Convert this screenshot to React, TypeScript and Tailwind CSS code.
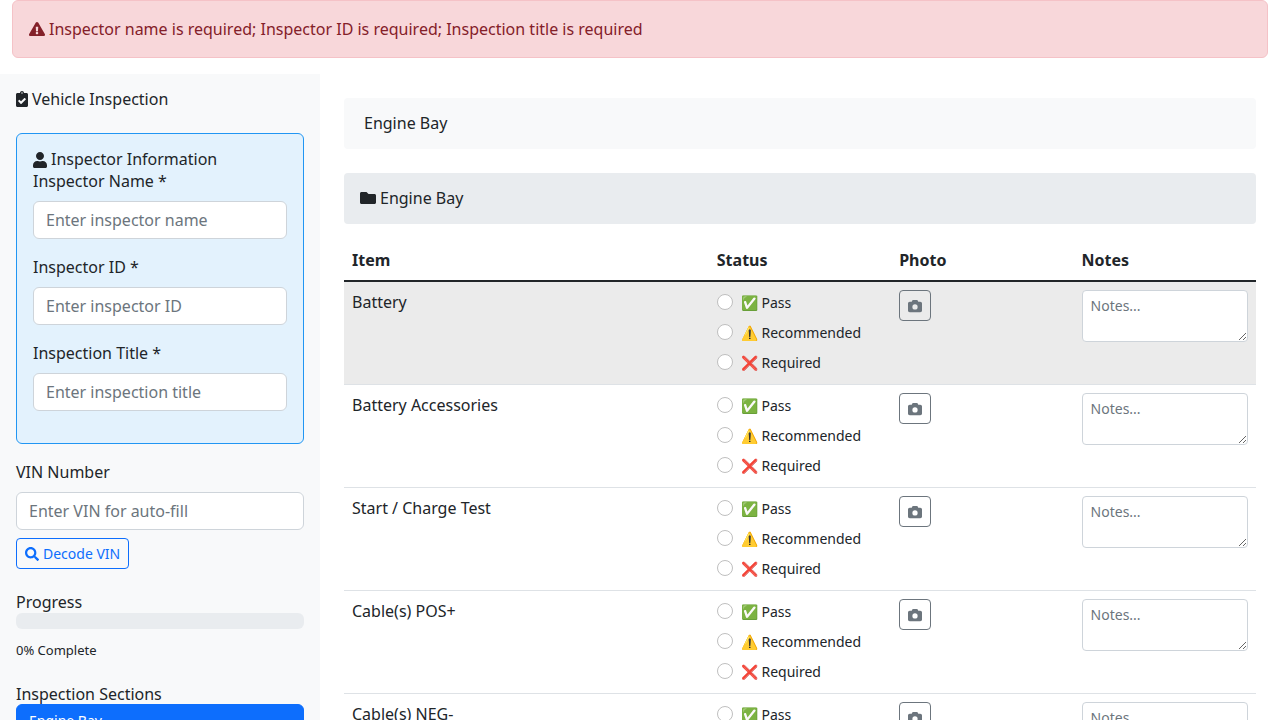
import {
  FaExclamationTriangle,
  FaClipboardCheck,
  FaUser,
  FaSearch,
  FaFolder,
} from 'react-icons/fa';
import { FaCamera } from 'react-icons/fa6';

const items = ['Battery', 'Battery Accessories', 'Start / Charge Test', 'Cable(s) POS+', 'Cable(s) NEG-', 'Drive Belts'];
const sections = ['Engine Bay', 'Fluids', 'Brakes', 'Tires'];
const statuses = [
  { emoji: '✅', label: 'Pass' },
  { emoji: '⚠️', label: 'Recommended' },
  { emoji: '❌', label: 'Required' },
];

const inputClass =
  'block h-[38px] w-full rounded-[6px] border border-[#ced4da] bg-white px-3 text-base text-[#212529] placeholder:text-[#6c757d] outline-none';

const Field = ({ label, placeholder }: { label: string; placeholder: string }) => (
  <div className="mb-4">
    <label className="mb-2 block leading-6">{label}</label>
    <input className={inputClass} placeholder={placeholder} />
  </div>
);

const App = () => {
  return (
    <div className="bg-white text-base leading-6 text-[#212529] [font-family:'Noto_Sans',sans-serif]">
      <div className="mx-3 mb-4 flex items-center gap-1 rounded-[6px] border border-[#f5c2c7] bg-[#f8d7da] p-4 text-[#842029]">
        <FaExclamationTriangle className="h-4 w-4" />
        <span>Inspector name is required; Inspector ID is required; Inspection title is required</span>
      </div>

      <div className="flex items-start">
        <aside className="w-[320px] shrink-0 bg-[#f8f9fa] p-4">
          <h5 className="mb-6 mt-[-1px] flex items-center gap-1 leading-[20px]">
            <FaClipboardCheck className="h-4 w-3" />
            Vehicle Inspection
          </h5>

          <div className="mb-4 rounded-[6px] border border-[#2196f3] bg-[#e3f2fd] p-4 pb-0">
            <h6 className="flex h-[19px] items-center gap-1 leading-[19px]">
              <FaUser className="h-4 w-[14px]" />
              Inspector Information
            </h6>
            <Field label="Inspector Name *" placeholder="Enter inspector name" />
            <Field label="Inspector ID *" placeholder="Enter inspector ID" />
            <div className="pb-4">
              <Field label="Inspection Title *" placeholder="Enter inspection title" />
            </div>
          </div>

          <label className="mb-2 block leading-6">VIN Number</label>
          <input className={inputClass} placeholder="Enter VIN for auto-fill" />
          <button className="mt-2 flex h-[31px] items-center gap-1 rounded-[4px] border border-[#0d6efd] px-2 text-sm text-[#0d6efd]">
            <FaSearch className="h-[14px] w-[14px]" />
            Decode VIN
          </button>

          <h6 className="mt-6 leading-[19px]">Progress</h6>
          <div className="mt-[1px] h-4 rounded-[6px] bg-[#e9ecef]" />
          <p className="mt-[11px] text-[13px] leading-[20px]">0% Complete</p>

          <h6 className="mt-[25px] leading-[19px]">Inspection Sections</h6>
          <div className="flex flex-col">
            {sections.map((s, i) => (
              <a
                key={s}
                className={
                  i === 0
                    ? 'rounded-t-[6px] border border-[#0d6efd] bg-[#0d6efd] px-3 py-1 text-sm leading-6 text-white'
                    : 'border border-t-0 border-[#dee2e6] bg-white px-3 py-1 text-sm leading-6'
                }
              >
                {s}
              </a>
            ))}
          </div>
        </aside>

        <main className="min-w-0 flex-1 p-6">
          <div className="mb-6 h-[51px] rounded-[4px] bg-[#f8f9fa] px-5 pt-[13px]">Engine Bay</div>
          <div className="mb-4 flex h-[51px] items-start gap-1 rounded-[4px] bg-[#e9ecef] px-4 pt-[13px]">
            <FaFolder className="mt-1 h-4 w-4" />
            Engine Bay
          </div>

          <table className="w-full table-fixed border-collapse">
            <thead>
              <tr className="border-b-2 border-[#212529] text-left">
                <th className="w-[40%] p-2 font-bold leading-6">Item</th>
                <th className="w-[20%] p-2 font-bold leading-6">Status</th>
                <th className="w-[20%] p-2 font-bold leading-6">Photo</th>
                <th className="w-[20%] p-2 font-bold leading-6">Notes</th>
              </tr>
            </thead>
            <tbody>
              {items.map((item, i) => (
                <tr key={item} className={i === 0 ? 'border-b border-[#dee2e6] bg-[#ebebeb]' : 'border-b border-[#dee2e6]'}>
                  <td className="p-2 align-top leading-6">{item}</td>
                  <td className="p-2 align-top">
                    <div className="flex flex-col gap-1">
                      {statuses.map((st) => (
                        <label key={st.label} className="flex h-[26px] items-center text-sm">
                          <input
                            type="radio"
                            name={item}
                            className="mb-[2px] h-4 w-4 appearance-none rounded-full border border-[#bfbfbf] bg-white"
                          />
                          <span className="ml-2">
                            {st.emoji} {st.label}
                          </span>
                        </label>
                      ))}
                    </div>
                  </td>
                  <td className="p-2 align-top">
                    <button className="flex h-[31px] w-8 items-center justify-center rounded-[4px] border border-[#6c757d] text-[#6c757d]">
                      <FaCamera className="h-[14px] w-[14px]" />
                    </button>
                  </td>
                  <td className="p-2 align-top">
                    <textarea
                      className="block h-[52px] w-full rounded-[4px] border border-[#ced4da] bg-white px-2 py-1 text-sm leading-[21px] placeholder:text-[#6c757d] outline-none"
                      placeholder="Notes..."
                    />
                  </td>
                </tr>
              ))}
            </tbody>
          </table>
        </main>
      </div>
    </div>
  );
};

export default App;
